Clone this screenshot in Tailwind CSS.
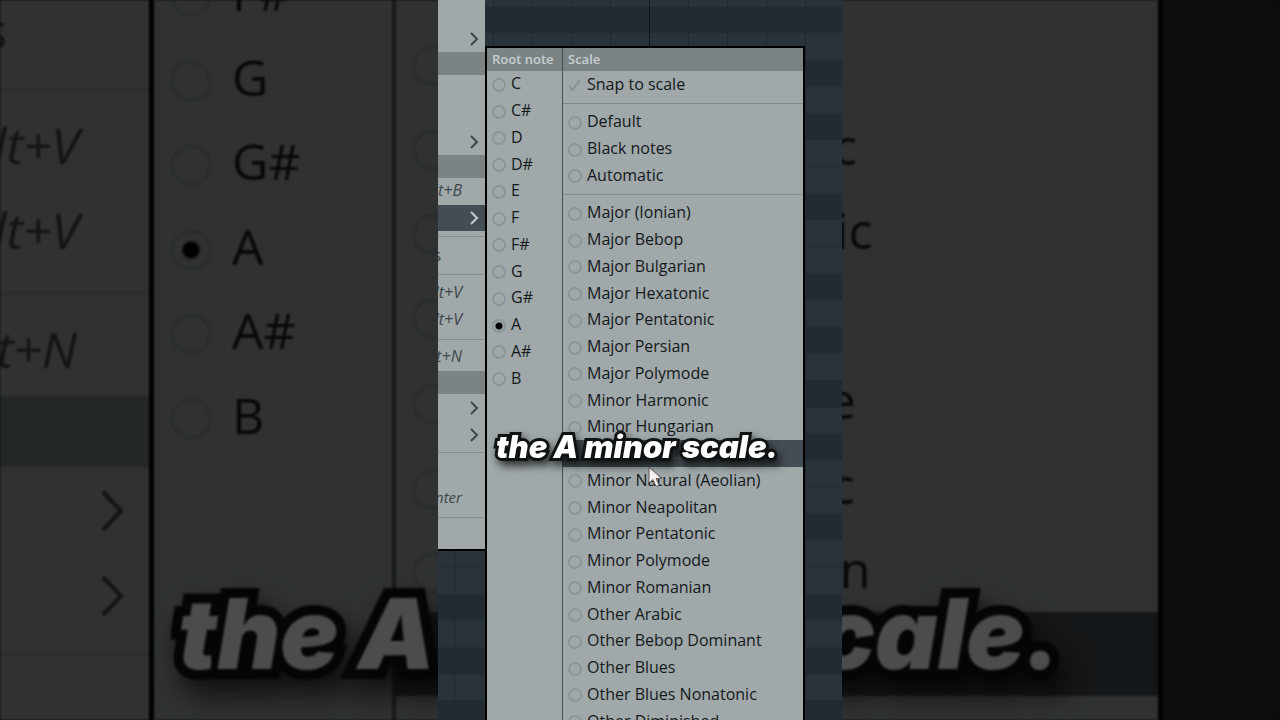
<!DOCTYPE html>
<html lang="en">
<head>
    <meta charset="UTF-8">
    <meta name="viewport" content="width=device-width, initial-scale=1.0">
    <title>Scale menu</title>
    <script src="https://cdn.jsdelivr.net/npm/@tailwindcss/browser@4"></script>
</head>
<body class="relative flex h-screen justify-center overflow-hidden bg-[#0a0d0e] font-['Open_Sans',sans-serif] text-[#14191b]">

    <!-- enlarged, dimmed copy of the menus behind the clip -->
    <div class="absolute inset-0 flex overflow-hidden bg-[#252e34] text-[50px] blur-[1px]" aria-hidden="true">
        <div class="flex w-[149px] shrink-0 flex-col items-end overflow-hidden bg-[#a0a8a9] italic text-[#3a4245]">
            <div class="h-[90px] w-full border-b-2 border-[#858d8f] leading-[60px] not-italic"><span class="float-right pr-[142px]">s</span></div>
            <div class="h-[14px]"></div>
            <div class="h-[85px] whitespace-nowrap pr-[70px] leading-[83px]">Alt+V</div>
            <div class="h-[85px] whitespace-nowrap pr-[70px] leading-[83px]">Alt+V</div>
            <div class="h-[20px] w-full border-b-2 border-[#858d8f]"></div>
            <div class="h-[102px] whitespace-nowrap pr-[72px] leading-[110px]">Alt+N</div>
            <div class="h-[71px] w-full bg-[#7b8385]"></div>
            <div class="flex h-[88px] items-center pr-6">
                <svg class="h-11 w-6" viewBox="0 0 24 44" fill="none" stroke="currentColor" stroke-width="4"><path d="M2 3 20 22 2 41"/></svg>
            </div>
            <div class="flex h-[82px] items-center pr-6">
                <svg class="h-11 w-6" viewBox="0 0 24 44" fill="none" stroke="currentColor" stroke-width="4"><path d="M2 3 20 22 2 41"/></svg>
            </div>
            <div class="h-[18px] w-full border-b-2 border-[#858d8f]"></div>
        </div>
        <div class="w-[5px] shrink-0 bg-black"></div>
        <div class="w-[238px] shrink-0 overflow-hidden bg-[#a0a8a9]">
            <div id="backRoots" class="-mt-[50px] flex h-[507px] flex-col pl-4"></div>
        </div>
        <div class="w-1 shrink-0 bg-[#505859]"></div>
        <div class="w-[762px] shrink-0 overflow-hidden bg-[#a0a8a9]">
            <div id="backScales" class="-mt-[66px] flex h-[847px] flex-col"></div>
        </div>
        <div class="w-[5px] shrink-0 bg-black"></div>
        <div class="absolute left-[178px] top-[577px] whitespace-nowrap font-['Inter',sans-serif] text-[97px] leading-[114px] font-black italic text-white [-webkit-text-stroke:20px_#101314] [paint-order:stroke_fill] drop-shadow-[8px_16px_14px_rgba(0,0,0,0.7)]">the A minor scale.</div>
        <div class="absolute inset-0 bg-black/70"></div>
    </div>

    <main class="relative h-full w-[404px] overflow-hidden bg-[#2a333a]">
        <!-- piano roll -->
        <div class="absolute inset-0 overflow-hidden">
            <div id="keys" class="-mt-[21px] flex h-[748px] flex-col"></div>
        </div>
        <div id="beats" class="absolute inset-0 flex"></div>

        <div class="relative flex h-full items-start">
            <!-- parent menu -->
            <div class="flex h-[551px] w-[47px] shrink-0 flex-col items-end overflow-hidden border-b-2 border-black bg-[#a0a8a9] text-base italic text-[#3f474a]">
                <div class="flex h-[52px] w-full items-end justify-end pr-[5px] pb-[5px]">
                    <svg class="h-4 w-3" viewBox="0 0 12 16" fill="none" stroke="currentColor" stroke-width="2"><path d="M3 2 9 8 3 14"/></svg>
                </div>
                <div class="h-[23px] w-full bg-[#7b8385]"></div>
                <div class="flex h-20 w-full items-end justify-end pr-[5px] pb-[5px]">
                    <svg class="h-4 w-3" viewBox="0 0 12 16" fill="none" stroke="currentColor" stroke-width="2"><path d="M3 2 9 8 3 14"/></svg>
                </div>
                <div class="h-[23px] w-full bg-[#7b8385]"></div>
                <div class="h-[27px] whitespace-nowrap pr-[23px] leading-[24px]">Alt+B</div>
                <div class="flex h-[26px] w-full items-center justify-end bg-[#454d54] pr-[5px] text-[#c5cacc]">
                    <svg class="h-4 w-3" viewBox="0 0 12 16" fill="none" stroke="currentColor" stroke-width="2"><path d="M3 2 9 8 3 14"/></svg>
                </div>
                <div class="h-[6px] w-full border-b border-[#858d8f]"></div>
                <div class="h-[38px] w-full border-b border-[#858d8f] leading-[36px] not-italic"><span class="float-right pr-[44px]">s</span></div>
                <div class="h-[5px]"></div>
                <div class="h-[27px] whitespace-nowrap pr-[23px] leading-[25px]">Alt+V</div>
                <div class="h-[27px] whitespace-nowrap pr-[23px] leading-[25px]">Alt+V</div>
                <div class="h-[6px] w-full border-b border-[#858d8f]"></div>
                <div class="h-[31px] whitespace-nowrap pr-[23px] leading-[32px]">Alt+N</div>
                <div class="h-[23px] w-full bg-[#7b8385]"></div>
                <div class="flex h-[27px] items-center pr-[5px]">
                    <svg class="h-4 w-3" viewBox="0 0 12 16" fill="none" stroke="currentColor" stroke-width="2"><path d="M3 2 9 8 3 14"/></svg>
                </div>
                <div class="flex h-[27px] items-center pr-[5px]">
                    <svg class="h-4 w-3" viewBox="0 0 12 16" fill="none" stroke="currentColor" stroke-width="2"><path d="M3 2 9 8 3 14"/></svg>
                </div>
                <div class="h-[5px] w-full border-b border-[#858d8f]"></div>
                <div class="h-[65px] w-full border-b border-[#858d8f]">
                    <span class="float-right whitespace-nowrap pr-[23px] text-[15px] leading-[88px]">Enter</span>
                </div>
            </div>

            <!-- root note / scale menu -->
            <form class="mt-[46px] flex h-[720px] w-[320px] shrink-0 border-2 border-black bg-[#a0a8a9] text-base">
                <fieldset class="flex w-[76px] flex-col border-r border-[#454d50]">
                    <legend class="float-left h-[23px] w-full bg-[#7b8385] pl-[5px] text-[13px] leading-[22px] font-semibold whitespace-nowrap text-[#c8cecf]">Root note</legend>
                    <div id="roots" class="-mt-px flex h-[321px] flex-col pl-[5px]"></div>
                </fieldset>
                <fieldset class="flex min-w-0 flex-1 flex-col">
                    <legend class="float-left h-[23px] w-full bg-[#7b8385] pl-[5px] text-[13px] leading-[22px] font-semibold text-[#c8cecf]">Scale</legend>
                    <label class="flex h-[33px] items-start gap-[6px] border-b border-[#7f8789] pt-px pl-[5px] leading-[24px]">
                        <input type="checkbox" class="peer sr-only" name="snap" checked>
                        <svg class="mt-[7px] size-[13px] text-[#858d8f]" viewBox="0 0 13 13" fill="none" stroke="currentColor" stroke-width="1.6"><path d="M1 7 4.5 11 12 1"/></svg>
                        Snap to scale
                    </label>
                    <div id="modes" class="mt-1 flex h-[80px] flex-col pl-[5px]"></div>
                    <div class="mt-[6px] h-[5px] border-t border-[#858d8f]"></div>
                    <div id="scales" class="flex h-[535px] shrink-0 flex-col"></div>
                </fieldset>
            </form>
        </div>

        <!-- mouse pointer -->
        <svg class="absolute top-[466px] left-[210px] h-[22px] w-[15px]" viewBox="0 0 15 22"><path d="M1 1V17L5 13.500 8 20.500 11 19 8 12.500H13.500Z" fill="#f4f4f4" stroke="#6b5a55" stroke-width="1"/></svg>

        <p class="absolute top-[430px] left-[58px] whitespace-nowrap font-['Inter',sans-serif] text-[31px] leading-[34px] font-black italic text-white [-webkit-text-stroke:6px_#101314] [paint-order:stroke_fill] drop-shadow-[3px_5px_4px_rgba(0,0,0,0.7)]">the A minor scale.</p>
    </main>

    <script>
        const roots = ['C', 'C#', 'D', 'D#', 'E', 'F', 'F#', 'G', 'G#', 'A', 'A#', 'B']
        const modes = ['Default', 'Black notes', 'Automatic']
        const scales = [
            'Major (Ionian)', 'Major Bebop', 'Major Bulgarian', 'Major Hexatonic', 'Major Pentatonic',
            'Major Persian', 'Major Polymode', 'Minor Harmonic', 'Minor Hungarian', 'Minor Melodic',
            'Minor Natural (Aeolian)', 'Minor Neapolitan', 'Minor Pentatonic', 'Minor Polymode', 'Minor Romanian',
            'Other Arabic', 'Other Bebop Dominant', 'Other Blues', 'Other Blues Nonatonic', 'Other Diminished'
        ]
        const active = 'Minor Melodic'

        const row = (text, name) => `
            <label class="flex flex-1 items-center gap-[5px] leading-[26px] whitespace-nowrap ${name === 'scale' ? 'pl-[5px]' : ''} ${text === active ? 'bg-[#454d54] text-[#5c656b]' : ''}">
                <input type="radio" name="${name}" ${text === 'A' ? 'checked' : ''}
                    class="mt-[3px] size-[14px] shrink-0 appearance-none rounded-full border-2 border-[#8d9697] checked:bg-[radial-gradient(circle,#000_3px,transparent_4px)] ${text === active ? 'invisible' : ''}">
                <span>${text}</span>
            </label>`

        const bigRow = (text, name) => `
            <label class="flex flex-1 items-center gap-5 leading-[84px] whitespace-nowrap ${name === 'backScale' ? 'pl-4' : ''} ${text === active ? 'bg-[#454d54] text-[#454d54]' : ''}">
                <input type="radio" name="${name}" tabindex="-1" ${text === 'A' ? 'checked' : ''}
                    class="mt-2 size-[42px] shrink-0 appearance-none rounded-full border-4 border-[#8d9697] checked:bg-[radial-gradient(circle,#000_7px,transparent_10px)] ${text === active ? 'invisible' : ''}">
                <span>${text}</span>
            </label>`

        const fill = (id, html) => document.getElementById(id).innerHTML = html
        fill('roots', roots.map(t => row(t, 'root')).join(''))
        fill('modes', modes.map(t => row(t, 'mode')).join(''))
        fill('scales', scales.map(t => row(t, 'scale')).join(''))
        fill('backRoots', roots.slice(6).map(t => bigRow(t, 'backRoot')).join(''))
        fill('backScales', scales.slice(1, 11).map(t => bigRow(t, 'backScale')).join(''))

        // d = black key lane, l = white key lane
        fill('keys', [...'ldldldlldlldldldldlldlldldld'].map(k =>
            `<div class="flex-1 border-t border-[#242d33] ${k === 'd' ? 'bg-[#232b32]' : 'bg-[#2a3339]'}"></div>`).join(''))
        fill('beats', '<div class="w-[17px] border-r border-[#20292f]"></div>' + [1, 2, 3, 4, 5, 6, 7, 8, 9].map(n =>
            `<div class="w-[39px] border-r ${n === 5 ? 'border-[#11181c]' : 'border-[#20292f]'}"></div>`).join(''))
    </script>
</body>
</html>
